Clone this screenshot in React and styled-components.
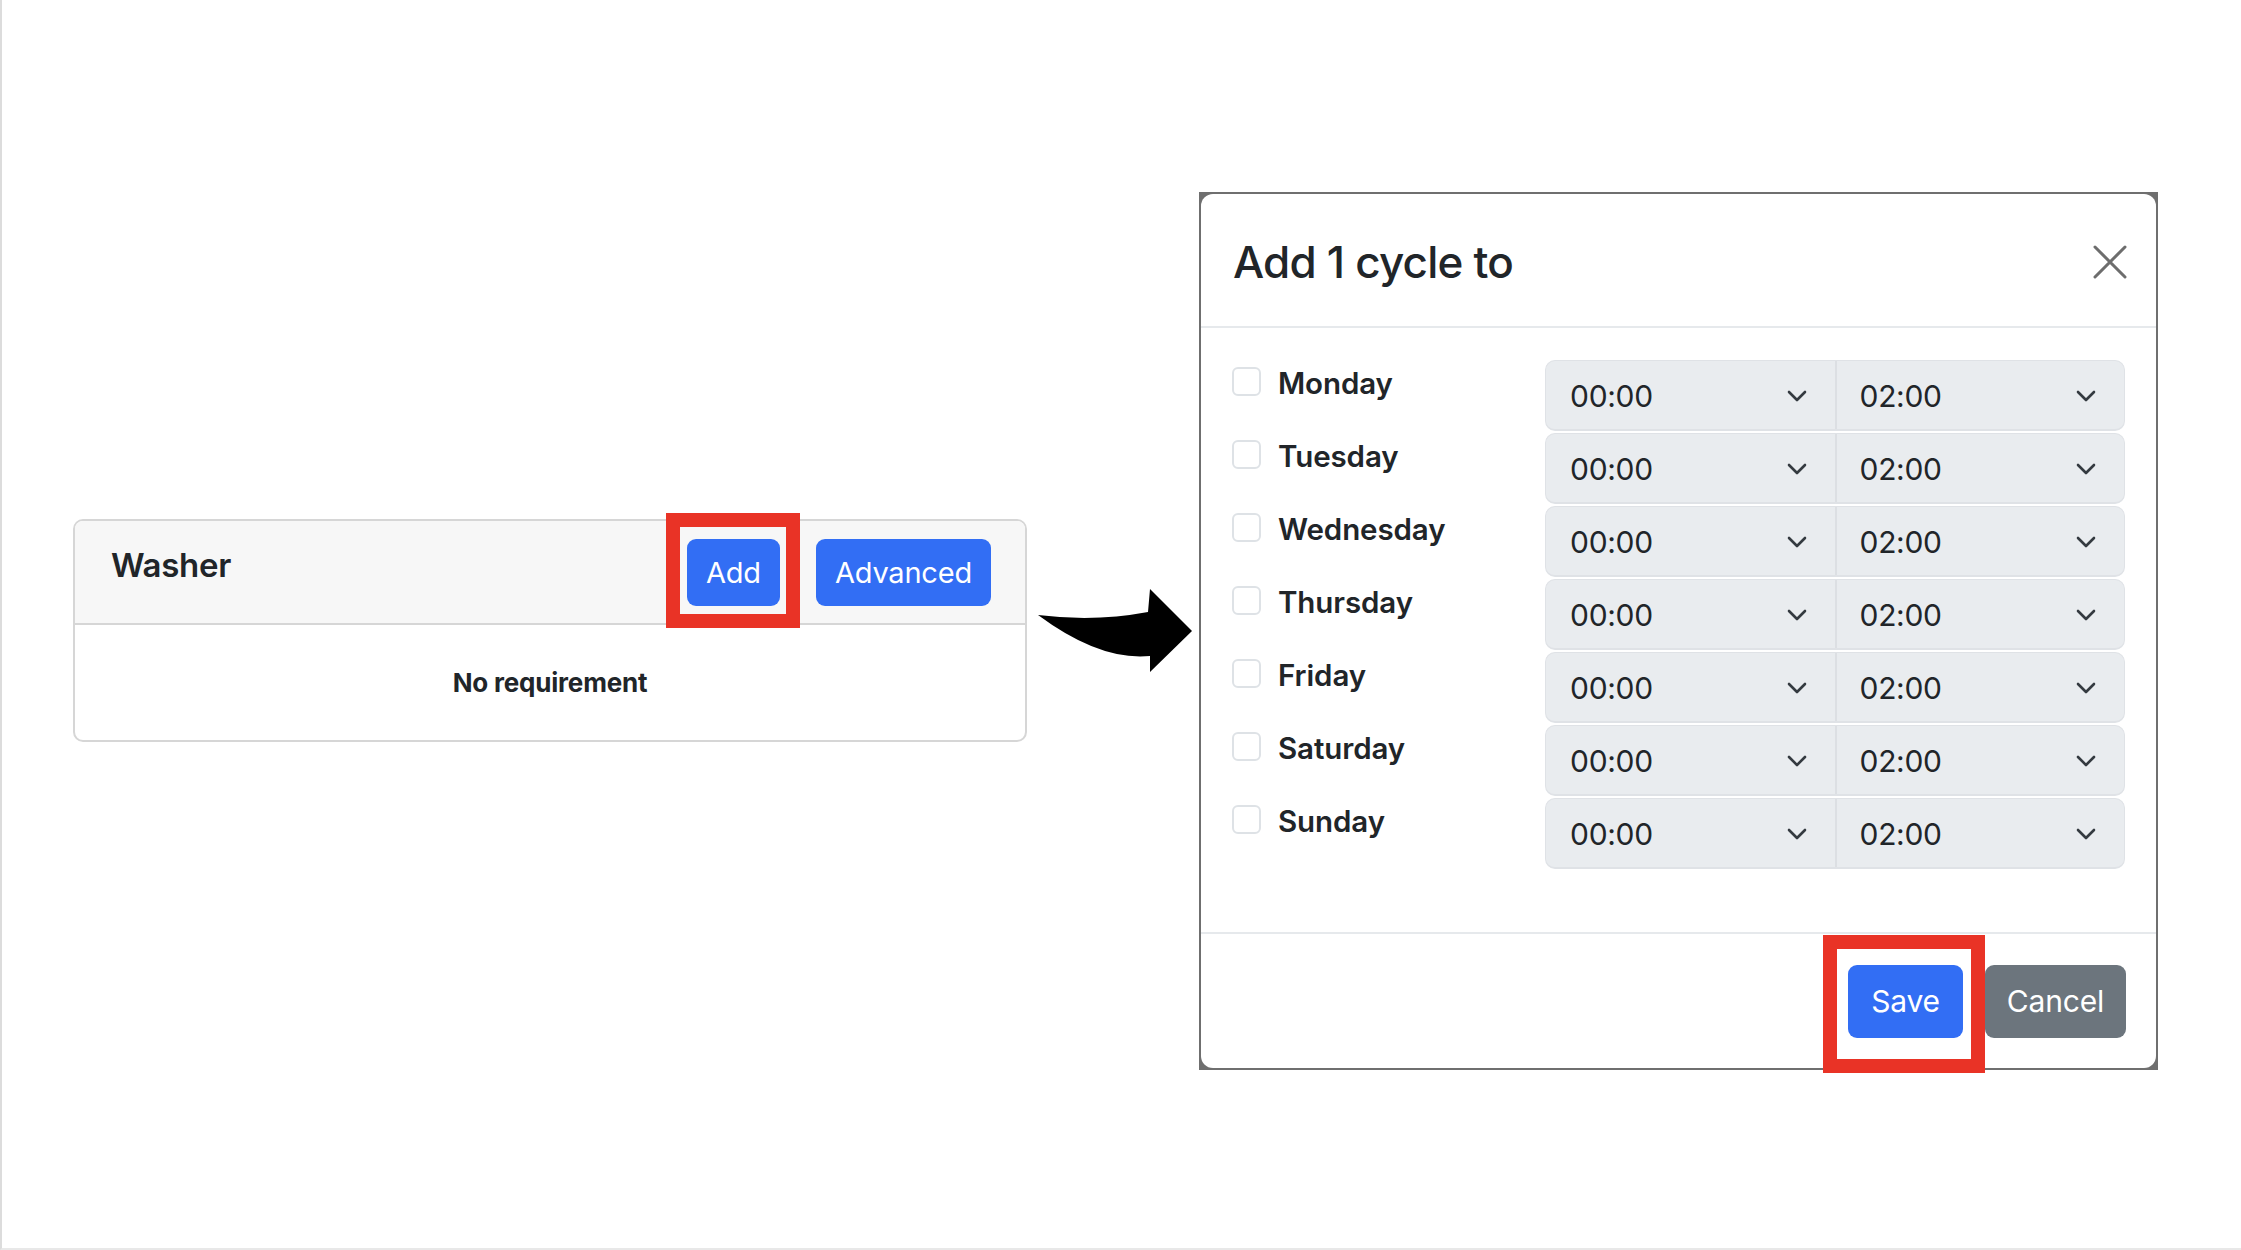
import React from "react";
import styled, { createGlobalStyle } from "styled-components";

const GlobalStyle = createGlobalStyle`
  html, body { margin: 0; padding: 0; background: #ffffff; }
  body { font-family: Inter, "Noto Sans", "Liberation Sans", sans-serif; color: #212529; }
  * { box-sizing: border-box; }
`;

const Page = styled.div`
  width: 2241px;
  height: 1250px;
  border-left: 2px solid #dcdcdc;
  border-bottom: 2px solid #e8e8e8;
  padding: 13px 0 0 71px;
  display: flex;
  align-items: center;
  background: #fff;
`;

const Card = styled.section`
  width: 954px;
  border: 2px solid #d6d6d6;
  border-radius: 10px;
  overflow: visible;
  background: #fff;
`;

const CardHeader = styled.header`
  height: 104px;
  display: flex;
  align-items: center;
  justify-content: space-between;
  padding: 0 34px 0 36px;
  background: #f7f7f7;
  border-bottom: 2px solid #d6d6d6;
  border-radius: 8px 8px 0 0;
`;

const CardTitle = styled.h5`
  margin: 0 0 14px;
  font-size: 33px;
  font-weight: 600;
  letter-spacing: -0.3px;
  color: #212529;
`;

const HeaderActions = styled.div`
  display: flex;
  align-items: center;
  gap: 36px;
`;

const Button = styled.button`
  height: ${(p) => p.$height}px;
  padding: 0 ${(p) => p.$padX}px;
  border: none;
  border-radius: 9px;
  font-family: inherit;
  font-size: ${(p) => p.$font}px;
  font-weight: 400;
  letter-spacing: -0.2px;
  color: #fff;
  background: ${(p) => (p.$variant === "secondary" ? "#6c757d" : "#326ef4")};
  cursor: pointer;
`;

const Highlight = styled.span`
  position: relative;
  display: inline-flex;
`;

const HighlightFrame = styled.span`
  position: absolute;
  top: ${(p) => -p.$t}px;
  right: ${(p) => -p.$r}px;
  bottom: ${(p) => -p.$b}px;
  left: ${(p) => -p.$l}px;
  border: 14px solid #e93326;
  pointer-events: none;
  z-index: 2;
`;

const CardBody = styled.div`
  height: 115px;
  display: flex;
  align-items: center;
  justify-content: center;
`;

const EmptyText = styled.p`
  margin: 0;
  font-size: 26px;
  font-weight: 700;
  letter-spacing: -0.2px;
  color: #212529;
`;

const ArrowSvg = styled.svg`
  flex: none;
  width: 160px;
  height: 100px;
  margin: 0 3px 0 9px;
`;

const ModalFrame = styled.div`
  width: 959px;
  padding: 2px;
  background: #6f6f6f;
`;

const Modal = styled.div`
  background: #fff;
  border-radius: 12px;
`;

const ModalHeader = styled.div`
  height: 134px;
  display: flex;
  align-items: center;
  justify-content: space-between;
  padding: 4px 29px 0 32px;
  border-bottom: 2px solid #e6e9ec;
`;

const ModalTitle = styled.h4`
  margin: 0;
  font-size: 44px;
  font-weight: 500;
  letter-spacing: -0.8px;
  color: #212529;
`;

const CloseButton = styled.button`
  width: 34px;
  height: 34px;
  padding: 0;
  border: none;
  background: transparent;
  display: flex;
  align-items: center;
  justify-content: center;
  cursor: pointer;
`;

const ModalBody = styled.div`
  padding: 32px 31px 63px 31px;
  display: flex;
  flex-direction: column;
  gap: 2px;
`;

const DayRow = styled.div`
  display: flex;
  align-items: flex-start;
  justify-content: space-between;
`;

const DayCheck = styled.label`
  display: flex;
  align-items: center;
  gap: 17px;
  padding-top: 7px;
  height: 36px;
`;

const Checkbox = styled.span`
  width: 29px;
  height: 29px;
  border: 2px solid #dee2e6;
  border-radius: 6px;
  background: #fff;
  flex: none;
`;

const DayLabel = styled.span`
  font-size: 29.5px;
  font-weight: 600;
  letter-spacing: -0.1px;
  color: #212529;
  margin-top: 4px;
`;

const SelectGroup = styled.div`
  width: 580px;
  height: 71px;
  display: flex;
  border-radius: 10px;
  background: #e9ecef;
  border: 1px solid #dfe2e6;
  border-bottom-width: 2px;
  overflow: hidden;
`;

const Select = styled.div`
  flex: 1;
  display: flex;
  align-items: center;
  justify-content: space-between;
  padding: 2px 28px 0 ${(p) => (p.$first ? 24 : 23)}px;
  border-left: ${(p) => (p.$first ? "none" : "2px solid #dcdfe3")};
`;

const SelectValue = styled.span`
  font-size: 30px;
  font-weight: 400;
  letter-spacing: -0.3px;
  color: #212529;
`;

const ModalFooter = styled.div`
  display: flex;
  justify-content: flex-end;
  align-items: center;
  gap: 22px;
  padding: 31px 30px 30px;
  border-top: 2px solid #e6e9ec;
`;

const Chevron = () => (
  <svg width="20" height="12" viewBox="0 0 20 12" aria-hidden="true">
    <polyline points="2,2 10,10 18,2" fill="none" stroke="#343a40" strokeWidth="2.6" strokeLinecap="round" strokeLinejoin="round" />
  </svg>
);

const days = ["Monday", "Tuesday", "Wednesday", "Thursday", "Friday", "Saturday", "Sunday"];

export default function App() {
  return (
    <>
      <GlobalStyle />
      <Page>
        <Card>
          <CardHeader>
            <CardTitle>Washer</CardTitle>
            <HeaderActions>
              <Highlight>
                <Button $height={67} $padX={19} $font={29}>Add</Button>
                <HighlightFrame $t={26} $r={20} $b={22} $l={21} />
              </Highlight>
              <Button $height={67} $padX={19} $font={29}>Advanced</Button>
            </HeaderActions>
          </CardHeader>
          <CardBody>
            <EmptyText>No requirement</EmptyText>
          </CardBody>
        </Card>

        <ArrowSvg viewBox="0 0 160 100" aria-hidden="true">
          <path
            d="M 2 34 Q 59 41 112 31 L 114 8 L 156 50 L 114 91 L 114 75 Q 64 80 2 34 Z"
            fill="#000"
          />
        </ArrowSvg>

        <ModalFrame>
          <Modal>
            <ModalHeader>
              <ModalTitle>Add 1 cycle to</ModalTitle>
              <CloseButton aria-label="Close">
                <svg width="34" height="34" viewBox="0 0 34 34">
                  <path d="M2 2 L32 32 M32 2 L2 32" stroke="#6d6d6d" strokeWidth="3" strokeLinecap="round" />
                </svg>
              </CloseButton>
            </ModalHeader>
            <ModalBody>
              {days.map((d) => (
                <DayRow key={d}>
                  <DayCheck>
                    <Checkbox />
                    <DayLabel>{d}</DayLabel>
                  </DayCheck>
                  <SelectGroup>
                    <Select $first>
                      <SelectValue>00:00</SelectValue>
                      <Chevron />
                    </Select>
                    <Select>
                      <SelectValue>02:00</SelectValue>
                      <Chevron />
                    </Select>
                  </SelectGroup>
                </DayRow>
              ))}
            </ModalBody>
            <ModalFooter>
              <Highlight>
                <Button $height={73} $padX={23} $font={30}>Save</Button>
                <HighlightFrame $t={30} $r={22} $b={35} $l={25} />
              </Highlight>
              <Button $height={73} $padX={22} $font={30} $variant="secondary">Cancel</Button>
            </ModalFooter>
          </Modal>
        </ModalFrame>
      </Page>
    </>
  );
}
